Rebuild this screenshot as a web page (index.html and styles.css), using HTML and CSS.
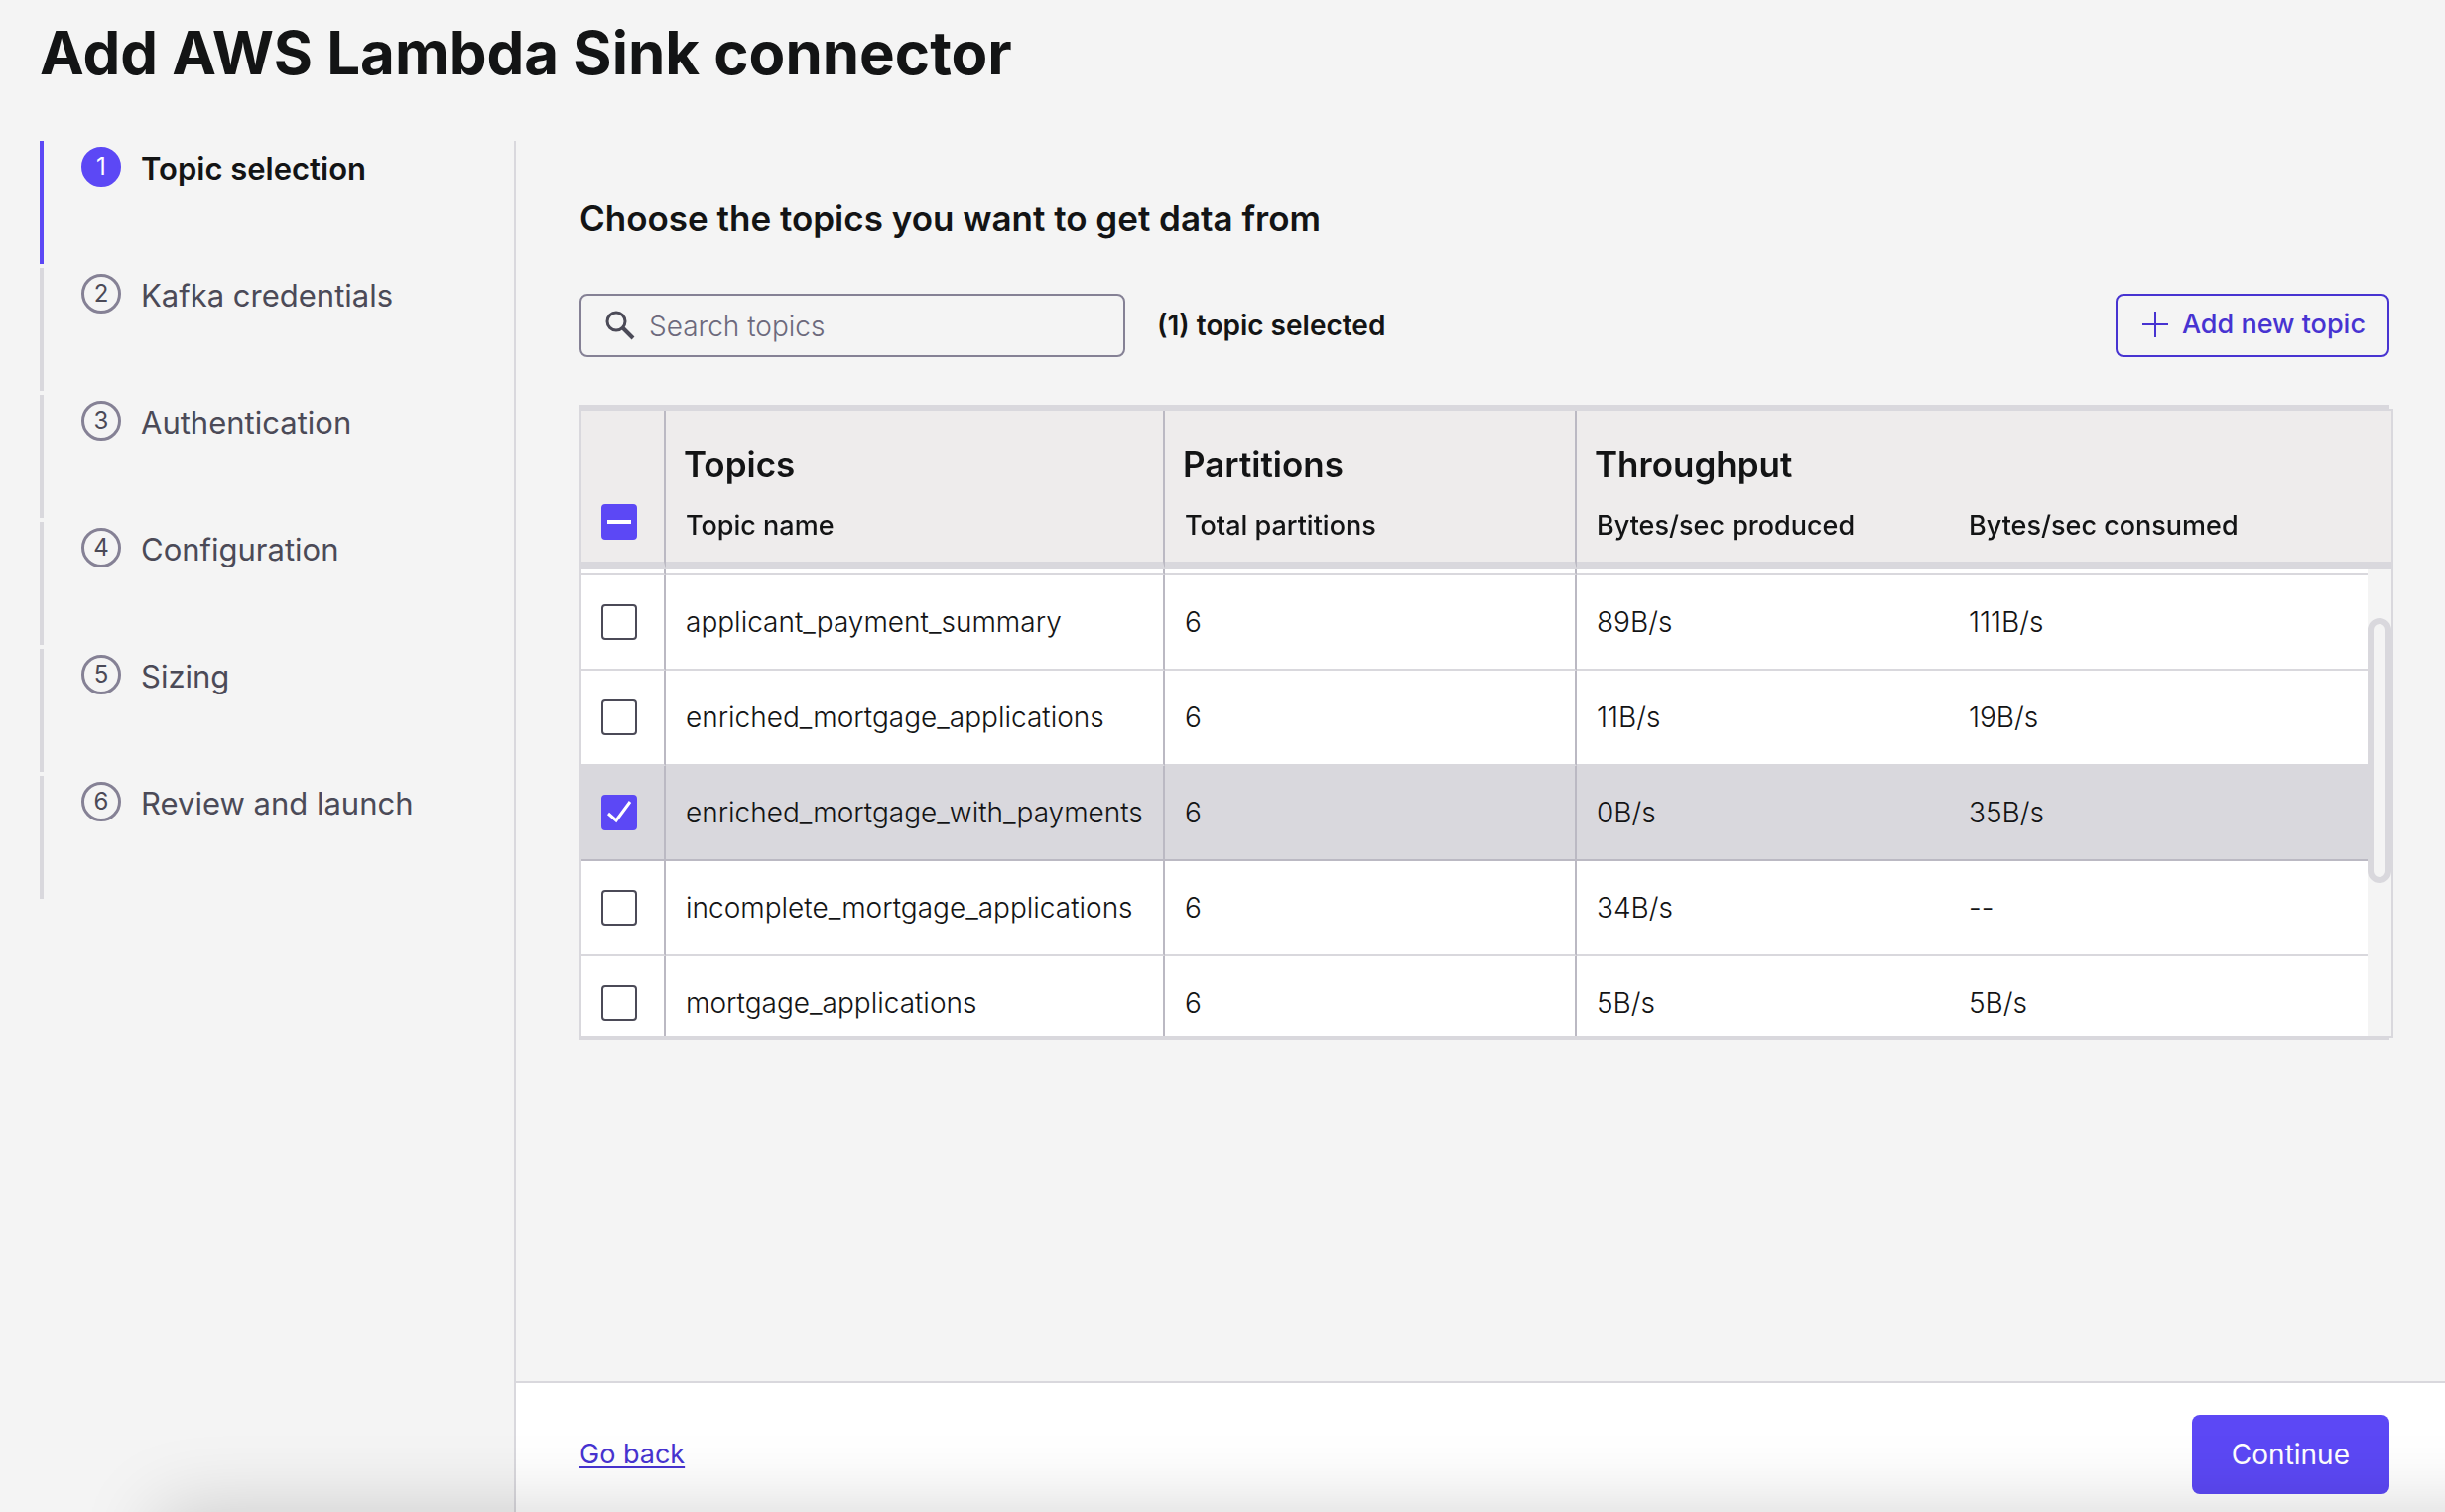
FILE: index.html
```html
<!DOCTYPE html>
<html lang="en">
<head>
<meta charset="utf-8">
<meta name="viewport" content="width=device-width, initial-scale=1">
<title>Add AWS Lambda Sink connector</title>
<link rel="stylesheet" href="styles.css">
</head>
<body>
<div class="page">
  <header class="page-header">
    <h1 class="page-title">Add AWS Lambda Sink connector</h1>
  </header>
  <div class="layout">
    <nav class="sidebar" aria-label="Setup steps">
      <ol class="steps">
        <li class="step step-active" aria-current="step"><span class="step-number">1</span><span class="step-label">Topic selection</span></li>
        <li class="step"><span class="step-number">2</span><span class="step-label">Kafka credentials</span></li>
        <li class="step"><span class="step-number">3</span><span class="step-label">Authentication</span></li>
        <li class="step"><span class="step-number">4</span><span class="step-label">Configuration</span></li>
        <li class="step"><span class="step-number">5</span><span class="step-label">Sizing</span></li>
        <li class="step"><span class="step-number">6</span><span class="step-label">Review and launch</span></li>
      </ol>
    </nav>
    <div class="workspace">
      <main class="content">
        <h2 class="section-title">Choose the topics you want to get data from</h2>
        <div class="toolbar">
          <label class="search">
            <svg class="search-icon" viewBox="0 0 30 30" aria-hidden="true"><circle cx="11" cy="11" r="9" fill="none" stroke="currentColor" stroke-width="3"/><path d="M17 17 28 28" fill="none" stroke="currentColor" stroke-width="4"/></svg>
            <input class="search-input" type="search" placeholder="Search topics" aria-label="Search topics">
          </label>
          <span class="selected-count">(1) topic selected</span>
          <button class="button button-outline" type="button">
            <svg class="plus-icon" viewBox="0 0 26 26" aria-hidden="true"><path d="M13 0V26M0 13H26" fill="none" stroke="currentColor" stroke-width="2"/></svg>
            Add new topic
          </button>
        </div>
        <div class="table-frame">
          <div class="table-box">
            <div class="table-scroll">
              <table class="topics">
                <colgroup><col class="col-check"><col class="col-name"><col class="col-partitions"><col class="col-produced"><col></colgroup>
                <thead>
                  <tr class="group-row">
                    <th class="check-head" rowspan="2"><input class="checkbox checkbox-mixed" type="checkbox" aria-label="Select all topics" aria-checked="mixed"></th>
                    <th class="ruled">Topics</th>
                    <th class="ruled">Partitions</th>
                    <th colspan="2">Throughput</th>
                  </tr>
                  <tr class="label-row">
                    <th class="ruled">Topic name</th>
                    <th class="ruled">Total partitions</th>
                    <th>Bytes/sec produced</th>
                    <th>Bytes/sec consumed</th>
                  </tr>
                </thead>
                <tbody>
                  <tr class="edge-row" aria-hidden="true"><td class="ruled"></td><td class="ruled"></td><td class="ruled"></td><td></td><td></td></tr>
                  <tr>
                    <td class="ruled check-cell"><input class="checkbox" type="checkbox" id="t1"></td>
                    <td class="ruled"><label for="t1">applicant_payment_summary</label></td>
                    <td class="ruled">6</td><td>89B/s</td><td>111B/s</td>
                  </tr>
                  <tr>
                    <td class="ruled check-cell"><input class="checkbox" type="checkbox" id="t2"></td>
                    <td class="ruled"><label for="t2">enriched_mortgage_applications</label></td>
                    <td class="ruled">6</td><td>11B/s</td><td>19B/s</td>
                  </tr>
                  <tr class="row-selected">
                    <td class="ruled check-cell"><span class="check-wrap"><input class="checkbox" type="checkbox" id="t3" checked><svg class="tick" viewBox="0 0 36 36" aria-hidden="true"><path d="M7 19 15 26 29 7" fill="none" stroke="#fff" stroke-width="3"/></svg></span></td>
                    <td class="ruled"><label for="t3">enriched_mortgage_with_payments</label></td>
                    <td class="ruled">6</td><td>0B/s</td><td>35B/s</td>
                  </tr>
                  <tr>
                    <td class="ruled check-cell"><input class="checkbox" type="checkbox" id="t4"></td>
                    <td class="ruled"><label for="t4">incomplete_mortgage_applications</label></td>
                    <td class="ruled">6</td><td>34B/s</td><td>--</td>
                  </tr>
                  <tr>
                    <td class="ruled check-cell"><input class="checkbox" type="checkbox" id="t5"></td>
                    <td class="ruled"><label for="t5">mortgage_applications</label></td>
                    <td class="ruled">6</td><td>5B/s</td><td>5B/s</td>
                  </tr>
                </tbody>
              </table>
            </div>
            <div class="scroll-track"><div class="scroll-thumb"></div></div>
          </div>
        </div>
      </main>
      <footer class="actions">
        <a class="back-link" href="#">Go back</a>
        <button class="button button-primary" type="button">Continue</button>
      </footer>
    </div>
  </div>
</div>
</body>
</html>
```
FILE: styles.css
```css
:root {
  --ink: #131415;
  --ink-soft: #4b4a57;
  --muted: #858195;
  --line: #d9d8dd;
  --line-strong: #bbb9c3;
  --accent: #5c48f5;
  --accent-dark: #4733d1;
  --surface: #f4f4f4;
}

* { box-sizing: border-box; }

body {
  margin: 0;
  background: var(--surface);
  color: var(--ink);
  font: 400 28px/32px Inter, "Liberation Sans", sans-serif;
}

/* Soft shadow cast upward from the lower edge of the window */
body::after {
  content: "";
  position: fixed;
  top: 100%;
  left: 160px;
  right: -100px;
  height: 100px;
  box-shadow: 0 0 80px rgba(0, 0, 0, 0.18);
  pointer-events: none;
}

.page {
  display: flex;
  flex-direction: column;
  min-height: 100vh;
}

.page-header { padding: 17px 40px 53px; }

.page-title {
  margin: 0;
  font-size: 60px;
  line-height: 72px;
  font-weight: 700;
}

.layout {
  flex: 1;
  display: flex;
}

.sidebar {
  flex: 0 0 520px;
  padding-left: 40px;
  border-right: 2px solid var(--line);
}

.steps {
  display: flex;
  flex-direction: column;
  gap: 4px;
  margin: 0;
  padding: 0;
  list-style: none;
}

.step {
  display: flex;
  align-items: flex-start;
  gap: 20px;
  height: 124px;
  padding: 6px 0 0 38px;
  border-left: 4px solid var(--line);
  color: var(--ink-soft);
}

.step-number {
  width: 40px;
  height: 40px;
  border: 3px solid var(--muted);
  border-radius: 50%;
  font-size: 24px;
  line-height: 34px;
  text-align: center;
}

.step-label {
  font-size: 31px;
  line-height: 44px;
}

.step-active {
  border-left-color: var(--accent);
  color: var(--ink);
  font-weight: 600;
}

.step-active .step-number {
  border-color: var(--accent);
  background: var(--accent);
  color: #fff;
  font-weight: 400;
}

.workspace {
  flex: 1;
  min-width: 0;
  display: flex;
  flex-direction: column;
}

.content {
  flex: 1;
  padding: 54px 56px 56px 64px;
}

.section-title {
  margin: 0 0 52px;
  font-size: 35px;
  line-height: 48px;
  font-weight: 600;
}

.toolbar {
  display: flex;
  align-items: center;
  margin-bottom: 48px;
}

.search {
  display: flex;
  align-items: center;
  gap: 14px;
  width: 550px;
  height: 64px;
  padding: 0 24px;
  border: 2px solid var(--muted);
  border-radius: 8px;
}

.search-icon {
  flex: none;
  width: 30px;
  height: 30px;
  color: var(--ink-soft);
}

.search-input {
  flex: 1;
  min-width: 0;
  padding: 2px 0 0;
  border: 0;
  outline: 0;
  background: none;
  color: var(--ink);
  font: inherit;
  font-weight: 300;
}

.search-input::placeholder { color: #6c697c; }

.selected-count {
  margin-left: 32px;
  font-weight: 600;
}

.button {
  border-radius: 8px;
  font: inherit;
  cursor: pointer;
}

.button-outline {
  display: flex;
  align-items: center;
  gap: 14px;
  height: 64px;
  margin-left: auto;
  padding: 0 22px 2px 25px;
  border: 2px solid var(--accent-dark);
  background: none;
  color: var(--accent-dark);
  font-size: 27px;
  font-weight: 500;
}

.plus-icon {
  width: 26px;
  height: 26px;
}

.table-frame {
  border: solid var(--line);
  border-width: 4px 0 2px;
}

.table-box {
  position: relative;
  width: calc(100% + 4px);
  border: 2px solid var(--line);
}

.table-scroll {
  height: 630px;
  overflow-y: auto;
  scrollbar-width: none;
}

.topics {
  width: 100%;
  table-layout: fixed;
  border-collapse: separate;
  border-spacing: 0;
  background: #fff;
}

.col-check { width: 85px; }
.col-name { width: 503px; }
.col-partitions { width: 415px; }
.col-produced { width: 375px; }

.topics thead {
  position: sticky;
  top: 0;
  z-index: 1;
}

.topics th {
  background: #eeecec;
  text-align: left;
}

.group-row th {
  height: 78px;
  padding: 30px 18px 0;
  font-size: 35px;
  line-height: 48px;
  font-weight: 600;
}

.label-row th {
  height: 82px;
  padding: 22px 20px 20px;
  border-bottom: 8px solid var(--line);
  font-size: 27px;
  font-weight: 500;
}

.topics .ruled { border-right: 2px solid var(--line-strong); }

.group-row .check-head {
  padding: 0 0 22px 20px;
  border-right: 2px solid var(--line-strong);
  border-bottom: 8px solid var(--line);
  vertical-align: bottom;
}

.topics td {
  height: 96px;
  padding: 0 20px;
  border-bottom: 2px solid var(--line);
  font-weight: 300;
  white-space: nowrap;
}

.topics .edge-row td {
  height: 6px;
  padding: 0;
}

.topics .check-cell { padding: 0 0 0 20px; }

.topics .row-selected td {
  background: var(--line);
  border-bottom-color: var(--line-strong);
}

.checkbox {
  appearance: none;
  display: block;
  width: 36px;
  height: 36px;
  margin: 0;
  border: 2px solid var(--ink-soft);
  border-radius: 4px;
  background: #fff;
}

.checkbox:checked {
  border-color: var(--accent);
  background: var(--accent);
}

.checkbox-mixed {
  border-color: var(--accent);
  background: linear-gradient(#fff, #fff) center / 24px 4px no-repeat var(--accent);
}

.check-wrap {
  display: block;
  position: relative;
  width: 36px;
}

.tick {
  position: absolute;
  inset: 0;
  width: 36px;
  height: 36px;
  pointer-events: none;
}

.scroll-track {
  position: absolute;
  top: 160px;
  right: 0;
  bottom: 0;
  width: 24px;
  padding-top: 49px;
  background: var(--surface);
}

.scroll-thumb {
  height: 267px;
  border: 6px solid var(--line);
  border-radius: 12px;
}

.actions {
  display: flex;
  align-items: center;
  justify-content: space-between;
  padding: 32px 56px 18px 64px;
  border-top: 2px solid var(--line);
  background: #fff;
}

.back-link {
  color: var(--accent-dark);
  font-size: 27px;
  text-decoration-thickness: 2px;
  text-underline-offset: 3px;
}

.button-primary {
  height: 80px;
  padding: 0 40px;
  border: 0;
  background: var(--accent);
  color: #fff;
}
```
